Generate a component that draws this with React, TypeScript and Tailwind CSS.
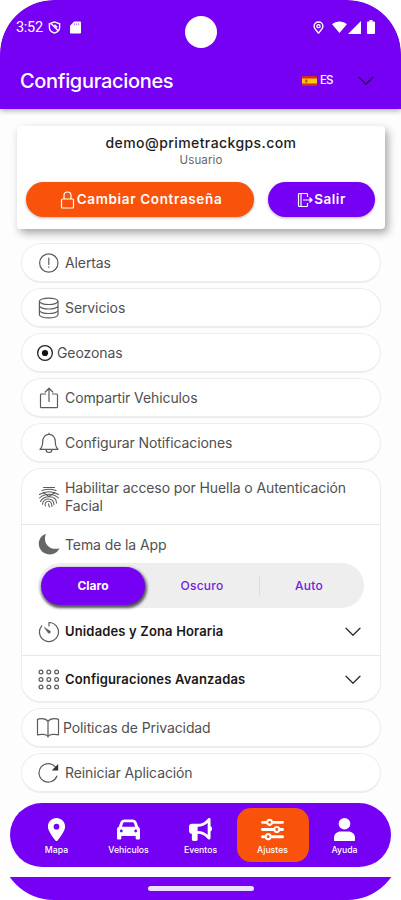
import type { ReactNode } from "react";
import clsx from "clsx";
import { FaBullhorn, FaCar, FaLocationDot, FaSliders } from "react-icons/fa6";

const UserIcon = ({ className }: { className?: string }) => (
  <svg viewBox="0 0 22 22" fill="currentColor" className={className}>
    <ellipse cx="11" cy="5.500" rx="5.600" ry="5.500" />
    <path d="M1 21.500v-2.700C1 15 4 12.800 7.500 12.800h7c3.500 0 6.500 2.200 6.500 6v2.700a.5.5 0 0 1-.5.5h-19a.5.5 0 0 1-.5-.5z" />
  </svg>
);

const TABS = [
  { label: "Mapa", icon: FaLocationDot },
  { label: "Vehículos", icon: FaCar },
  { label: "Eventos", icon: FaBullhorn },
  { label: "Ajustes", icon: FaSliders, active: true },
  { label: "Ayuda", icon: UserIcon },
];

const Glyph = ({ children, className }: { children: ReactNode; className?: string }) => (
  <svg
    viewBox="0 0 22 22"
    fill="none"
    stroke="#5c5c5c"
    strokeWidth="1.200"
    strokeLinecap="round"
    strokeLinejoin="round"
    className={clsx("shrink-0", className ?? "size-[22px]")}
  >
    {children}
  </svg>
);

const AlertIcon = () => (
  <Glyph>
    <circle cx="10.800" cy="11" r="9.200" />
    <path d="M10.800 6v6.500M10.800 14.800v.5" />
  </Glyph>
);

const DatabaseIcon = () => (
  <Glyph>
    <ellipse cx="10.700" cy="4.300" rx="9.300" ry="3.200" />
    <path d="M1.400 4.300v13.400c0 1.800 4.200 3.200 9.300 3.200s9.300-1.400 9.300-3.200V4.300M1.400 8.800c0 1.800 4.200 3.200 9.300 3.200s9.300-1.400 9.300-3.200M1.400 13.300c0 1.800 4.200 3.200 9.300 3.200s9.300-1.400 9.300-3.200" />
  </Glyph>
);

const TargetIcon = () => (
  <Glyph className="size-[18px]">
    <circle cx="11" cy="11" r="9" stroke="#222" strokeWidth="1.600" />
    <circle cx="11" cy="11" r="3.800" fill="#111" stroke="none" />
  </Glyph>
);

const ShareIcon = () => (
  <Glyph>
    <path d="M7.500 7H3.400a.9.9 0 0 0-.9.9v11.800c0 .5.4.9.9.9h15.200c.5 0 .9-.4.9-.9V7.900a.9.9 0 0 0-.9-.9h-4.100M11 14.500V1.500M7.200 5L11 1.300 14.800 5" />
  </Glyph>
);

const BellIcon = () => (
  <Glyph>
    <path d="M11 1v1.200M2 17.300h18c-2.200-2-2.700-3.500-2.700-7.500 0-4.700-2.600-7.500-6.300-7.500S4.700 5.100 4.700 9.800c0 4-.5 5.500-2.700 7.500zM8 17.500c0 1.900 1.300 3 3 3s3-1.100 3-3" />
  </Glyph>
);

const FingerprintIcon = () => (
  <Glyph>
    <path
      strokeWidth="1.050"
      d="M5.500 1.500h11M4 4.500c4.500-1.500 9.500-1.500 14 0M1.500 8.500C7 4.800 15 4.800 20.500 8.500M1.500 12C4 9.500 7 8.300 11 8.300s7 1.200 9.500 3.700M2.500 15.500c1.500-3 4.500-4.800 8.500-4.800 5 0 7.500 2.800 7.500 6.300M4.500 18.300c0-3.500 2.800-5.300 6-5.300 3.500 0 5.300 2 5.500 5.800M7.300 20c-.8-2.800.5-4.700 3.200-4.700 2.300 0 3.200 1.700 3.500 5.200M10.500 17.800c.2 1.200.4 2.200 1 3.200M5 6.500l6 4 6-4"
    />
  </Glyph>
);

const TimerIcon = () => (
  <Glyph>
    <path d="M11 5V1.500a9.500 9.500 0 1 1-7.200 3.300" />
    <path d="M6.500 6.500l5.700 3.700a1.300 1.300 0 0 1-1.800 1.800z" fill="#5c5c5c" strokeWidth=".6" />
  </Glyph>
);

const DotsIcon = () => (
  <Glyph>
    {[3, 10.5, 18].map((y) =>
      [3, 10.8, 18.6].map((x) => <circle key={`${x}-${y}`} cx={x} cy={y} r="1.900" />),
    )}
  </Glyph>
);

const BookIcon = () => (
  <svg viewBox="0 0 24 22" fill="none" stroke="#5c5c5c" strokeWidth="1.200" strokeLinejoin="round" className="h-[22px] w-6 shrink-0">
    <path d="M12 4.500c-1.300-2-3.500-2.900-6-2.900-2 0-3.500.3-4.500.8v15.500c3.500-1 8.500-.8 10.500 1.400 2-2.200 7-2.400 10.500-1.400V2.400c-1-.5-2.500-.8-4.500-.8-2.500 0-4.700.9-6 2.900zM12 4.500v16" />
  </svg>
);

const RefreshIcon = () => (
  <Glyph>
    <path d="M18.900 14a9.200 9.200 0 1 1-1.600-9" />
    <path d="M20.200 2v6.500h-6.500z" fill="#333" stroke="none" />
  </Glyph>
);

const MoonIcon = () => (
  <Glyph>
    <path d="M8 .8C6 5.500 7 10 10 13c3 2.800 7.200 3.600 11.500 2.200C19.800 19 16 21.400 12 21.400 5.800 21.400.8 17 .8 10.800.8 6.200 3.600 2.300 8 .8z" fill="#666" stroke="none" />
  </Glyph>
);

const Chevron = ({ className, color = "#333" }: { className?: string; color?: string }) => (
  <svg viewBox="0 0 16 10" fill="none" stroke={color} strokeWidth="1.400" strokeLinecap="round" strokeLinejoin="round" className={clsx("h-[10px] w-4 shrink-0", className)}>
    <path d="M1 1.200l7 7 7-7" />
  </svg>
);

const StatusBar = () => (
  <div className="relative flex h-[54px] items-center pl-4 pr-[26px] text-white">
    <span className="w-[27px] pt-px font-[Roboto] text-[14.500px] tracking-[-0.300px]">3:52</span>
    <svg viewBox="0 0 14 14" className="ml-[5px] size-[13px]" fill="none" stroke="white" strokeWidth="1.500">
      <path d="M7 1L1.500 3v4c0 2.800 2.300 5 5.500 6 3.200-1 5.500-3.200 5.500-6V3zM3 2.500l8.500 8.500M7 4l3 3" />
    </svg>
    <svg viewBox="0 0 12 14" className="ml-[9px] h-[13px] w-[11px]">
      <path d="M4.500.5H11a1 1 0 0 1 1 1v11a1 1 0 0 1-1 1H1a1 1 0 0 1-1-1V5z" fill="white" />
      <path d="M5 2.500v2M7.200 2.500v2M9.400 2.500v2" stroke="#7600f3" strokeWidth=".6" />
    </svg>
    <div className="absolute left-[185px] top-4 size-8 rounded-full bg-white" />
    <div className="ml-auto flex items-center">
      <svg viewBox="0 0 12 14" className="h-[13px] w-[11px]" fill="none" stroke="white" strokeWidth="1.500">
        <path d="M6 1C3.200 1 1.200 3 1.200 5.500 1.200 8 3.500 10 6 13c2.500-3 4.800-5 4.800-7.500C10.800 3 8.800 1 6 1z" />
        <circle cx="6" cy="5.500" r="1.700" />
      </svg>
      <svg viewBox="0 0 16 13" className="ml-2 h-[12px] w-[15px]" fill="white">
        <path d="M0 3.500C4.500-.5 11.500-.5 16 3.500L8 13z" />
      </svg>
      <svg viewBox="0 0 13 13" className="ml-px size-[13px]" fill="white">
        <path d="M0 13L13 0v13z" />
      </svg>
      <svg viewBox="0 0 8 14" className="ml-[6px] h-[14px] w-2" fill="white">
        <path d="M2.500 0h3v1.500H7a1 1 0 0 1 1 1V13a1 1 0 0 1-1 1H1a1 1 0 0 1-1-1V2.500a1 1 0 0 1 1-1h1.500z" />
      </svg>
    </div>
  </div>
);

const Header = () => (
  <header className="h-[109px] shrink-0 rounded-t-[54px] bg-[#7600f3] shadow-[0_2px_5px_rgba(0,0,0,0.3)]">
    <StatusBar />
    <div className="flex h-[54px] items-center pl-5 pr-[27px] text-white">
      <h1 className="whitespace-nowrap text-[20px] font-medium tracking-[-0.320px]">Configuraciones</h1>
      <svg viewBox="0 0 15 10" className="ml-auto h-[10px] w-[15px]">
        <rect width="15" height="10" rx="1" fill="#d52b1e" />
        <rect y="2.500" width="15" height="5" fill="#fbc515" />
        <rect x="3" y="3.500" width="2.500" height="3" fill="#b5651d" />
      </svg>
      <span className="ml-[3px] w-[13px] text-[11.500px] font-medium tracking-[-0.900px]">ES</span>
      <Chevron color="#26104d" className="ml-[25px]" />
    </div>
  </header>
);

const AccountCard = () => (
  <section className="ml-[17px] mt-[17px] h-[103px] w-[368px] shrink-0 rounded bg-white px-[9px] pt-2 text-center shadow-[3px_4px_9px_rgba(0,0,0,0.35)]">
    <div className="text-[14px] font-medium leading-[18px] tracking-[0.420px] text-[#1d1d1d]">demo@primetrackgps.com</div>
    <div className="text-[11.500px] leading-4 tracking-[0.100px] text-[#666]">Usuario</div>
    <div className="mt-[14px] flex gap-[14px] text-[13.500px] font-semibold text-white">
      <button className="flex h-[35px] w-[228px] items-center justify-center gap-[2px] whitespace-nowrap rounded-full bg-[#f9520b] pl-[2px] tracking-[0.650px] shadow-[0_1px_3px_rgba(0,0,0,0.3)]">
        <svg viewBox="0 0 15 18" className="h-[18px] w-[15px]" fill="none" stroke="white" strokeWidth="1.200">
          <rect x="1.500" y="8" width="12" height="9" rx="1" />
          <path d="M4 8V4.500C4 2.300 5.500 1 7.500 1S11 2.300 11 4.500V8" />
        </svg>
        Cambiar Contraseña
      </button>
      <button className="flex h-[35px] w-[107px] items-center justify-center rounded-full bg-[#7600f3] tracking-[0.550px] shadow-[0_1px_3px_rgba(0,0,0,0.3)]">
        <svg viewBox="0 0 17 16" className="h-4 w-[17px]" fill="none" stroke="white" strokeWidth="1.200">
          <path d="M10.500 5V2.500a1 1 0 0 0-1-1h-7a1 1 0 0 0-1 1v11a1 1 0 0 0 1 1h7a1 1 0 0 0 1-1V11M6 8h7M4 1.500v13" />
          <path d="M12.500 4.800L16 8l-3.500 3.200z" fill="white" stroke="none" />
        </svg>
        Salir
      </button>
    </div>
  </section>
);

const Row = ({ icon, label, tight }: { icon: ReactNode; label: string; tight?: boolean }) => (
  <div
    className={clsx(
      "flex h-[40px] shrink-0 items-center whitespace-nowrap rounded-full border border-b-2 border-[#ededed] bg-white",
      tight ? "gap-[3px] pl-[14px]" : "gap-[5px] pl-4",
    )}
  >
    {icon}
    {label}
  </div>
);

const ThemeSwitch = () => (
  <div className="ml-4 flex h-[45px] w-[326px] items-center rounded-full bg-[#eee] pl-[3px] text-[12px] font-medium tracking-[0.250px] text-[#7020e0]">
    <button className="h-[38px] w-[104px] rounded-full bg-[#7600f3] font-bold tracking-normal text-white shadow-[1px_2px_3px_1px_rgba(0,0,0,0.65)]">Claro</button>
    <button className="w-[114px]">Oscuro</button>
    <div className="h-5 w-px bg-[#ddd]" />
    <button className="flex-1 pr-[6px]">Auto</button>
  </div>
);

const Expandable = ({ icon, label }: { icon: ReactNode; label: string }) => (
  <div className="flex h-[47px] items-center gap-[5px] pl-4 pr-[19px] text-[13px] font-semibold tracking-[0.150px] text-[#181818]">
    {icon}
    <span className="flex-1 whitespace-nowrap">{label}</span>
    <Chevron />
  </div>
);

const SettingsGroup = () => (
  <div className="h-[235px] shrink-0 overflow-hidden rounded-[20px] border border-b-2 border-[#ededed] bg-white">
    <div className="flex h-[56px] items-center gap-[5px] border-b border-[#e8e8e8] pl-4">
      <FingerprintIcon />
      <span className="w-[295px] leading-[18px]">Habilitar acceso por Huella o Autenticación Facial</span>
    </div>
    <div className="flex h-[38px] items-center gap-[5px] pl-4">
      <MoonIcon />
      Tema de la App
    </div>
    <ThemeSwitch />
    <Expandable icon={<TimerIcon />} label="Unidades y Zona Horaria" />
    <div className="border-t border-[#e8e8e8]">
      <Expandable icon={<DotsIcon />} label="Configuraciones Avanzadas" />
    </div>
  </div>
);

const TabBar = () => (
  <nav className="mx-[10px] mt-[10px] flex h-16 shrink-0 items-center justify-center rounded-full bg-[#7600f3]">
    {TABS.map(({ label, icon: Icon, active }) => (
      <button
        key={label}
        className={clsx(
          "flex h-[54px] w-[72px] flex-col items-center rounded-[14px] pt-[10px] text-[8.700px] font-medium text-white",
          active && "bg-[#f9520b]",
        )}
      >
        <Icon className="size-[23px]" />
        <span className="mt-[3px] leading-3">{label}</span>
      </button>
    ))}
  </nav>
);

export default function App() {
  return (
    <div className="h-[900px] w-[401px] bg-white">
      <div className="flex h-full flex-col overflow-hidden rounded-[54px] bg-[#fdfdfd] font-[Inter,sans-serif]">
        <Header />
        <AccountCard />
        <main className="ml-[21px] mt-[14px] flex w-[360px] flex-col gap-[5px] text-[14px] tracking-[-0.100px] text-[#505050]">
          <Row icon={<AlertIcon />} label="Alertas" />
          <Row icon={<DatabaseIcon />} label="Servicios" />
          <Row icon={<TargetIcon />} label="Geozonas" tight />
          <Row icon={<ShareIcon />} label="Compartir Vehiculos" />
          <Row icon={<BellIcon />} label="Configurar Notificaciones" />
          <SettingsGroup />
          <Row icon={<BookIcon />} label="Politicas de Privacidad" tight />
          <Row icon={<RefreshIcon />} label="Reiniciar Aplicación" />
        </main>
        <TabBar />
        <div className="mt-auto flex h-[23px] shrink-0 justify-center bg-[#7600f3] pt-[9px]">
          <div className="h-[5px] w-[106px] rounded-sm bg-[#eee0ff]" />
        </div>
      </div>
    </div>
  );
}
